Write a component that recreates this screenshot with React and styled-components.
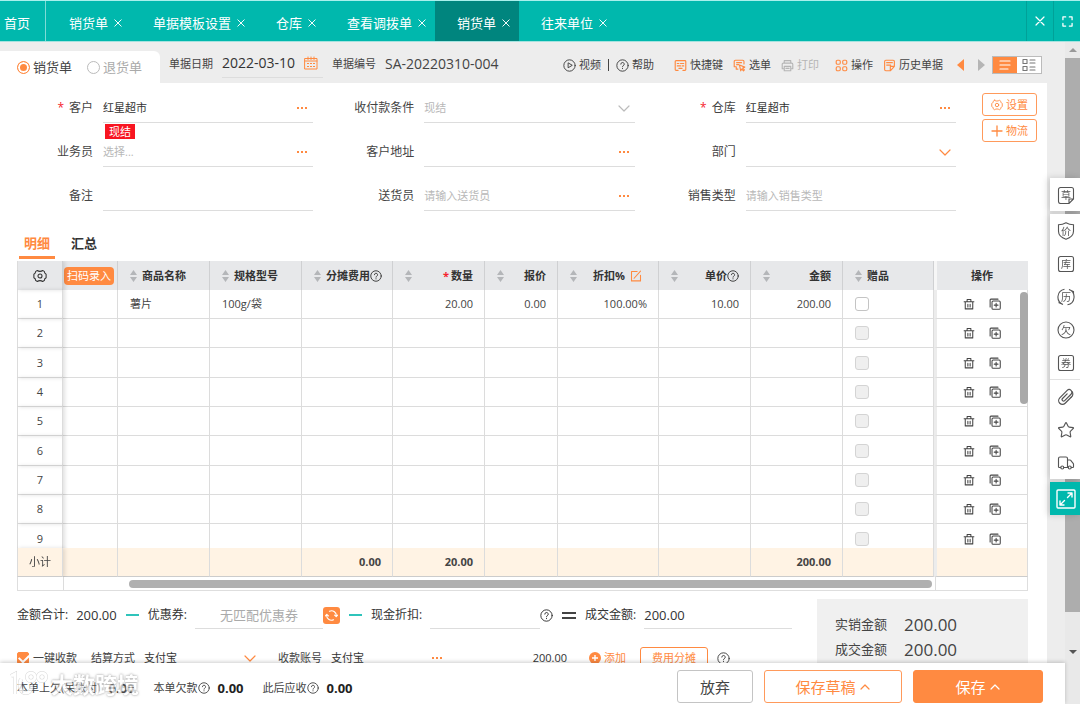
import React, { useState } from "react";
import styled, { createGlobalStyle } from "styled-components";
import { Star, Truck } from "lucide-react";

const tabs = ["销货单", "单据模板设置", "仓库", "查看调拨单", "销货单", "往来单位"];

const columns = [
  { key: "name", title: "商品名称", width: 92 },
  { key: "spec", title: "规格型号", width: 92 },
  { key: "fee", title: "分摊费用", width: 91, right: true, help: true },
  { key: "qty", title: "数量", width: 92, right: true, required: true },
  { key: "quote", title: "报价", width: 73, right: true },
  { key: "discount", title: "折扣%", width: 101, right: true, edit: true },
  { key: "price", title: "单价", width: 92, right: true, help: true },
  { key: "amount", title: "金额", width: 92, right: true },
];

const goods = {
  name: "薯片",
  spec: "100g/袋",
  qty: "20.00",
  quote: "0.00",
  discount: "100.00%",
  price: "10.00",
  amount: "200.00",
};

const totals = { fee: "0.00", qty: "20.00", amount: "200.00" };

const fields = [
  { id: "customer", label: "客户", value: "红星超市", more: "dots", required: true, tag: "现结" },
  { id: "terms", label: "收付款条件", placeholder: "现结", more: "down", muted: true },
  { id: "store", label: "仓库", value: "红星超市", more: "dots", required: true },
  { id: "sales", label: "业务员", placeholder: "选择...", more: "dots" },
  { id: "address", label: "客户地址", more: "dots" },
  { id: "dept", label: "部门", more: "down" },
  { id: "remark", label: "备注" },
  { id: "courier", label: "送货员", placeholder: "请输入送货员", more: "dots" },
  { id: "kind", label: "销售类型", placeholder: "请输入销售类型" },
];

/* ---------- icons ---------- */

function Icon({ size = 13, view = 16, width = 1.2, children }) {
  return (
    <svg
      width={size}
      height={size}
      viewBox={`0 0 ${view} ${view}`}
      fill="none"
      stroke="currentColor"
      strokeWidth={width}
      strokeLinecap="round"
      strokeLinejoin="round"
      aria-hidden="true"
    >
      {children}
    </svg>
  );
}

const HelpIcon = ({ size = 13 }) => (
  <Icon size={size}>
    <circle cx="8" cy="8" r="7" />
    <path d="M5.9 6.3a2.1 2.1 0 1 1 3 2c-.6.3-.9.6-.9 1.3M8 11.6v.3" />
  </Icon>
);

const CrossIcon = ({ size = 9 }) => (
  <Icon size={size} view={10} width={1.2}>
    <path d="M1 1l8 8M9 1l-8 8" />
  </Icon>
);

const ChevronIcon = ({ up, size = 12 }) => (
  <Icon size={size} view={12} width={1.2}>
    <path d={up ? "M2 8l4-4 4 4" : "M1 4l5 5 5-5"} />
  </Icon>
);

const DotsIcon = () => (
  <svg width="12" height="12" viewBox="0 0 12 12" fill="currentColor" aria-hidden="true">
    <rect x="1" y="5" width="2" height="2" />
    <rect x="5" y="5" width="2" height="2" />
    <rect x="9" y="5" width="2" height="2" />
  </svg>
);

const GearIcon = ({ size = 14 }) => (
  <Icon size={size}>
    <path d="M5 1.700c.9.8 1.6 1 3 1s2.100-.2 3-1c1 .3 2 1.200 2 1.200-.1 1.300.3 2.200 2 3v4.200c-1.700.8-2.100 1.700-2 3 0 0-1 .9-2 1.200-.9-.8-1.600-1-3-1s-2.100.2-3 1c-1-.3-2-1.200-2-1.200.1-1.300-.3-2.200-2-3V5.900c1.700-.8 2.100-1.700 2-3 0 0 1-.9 2-1.200z" />
    <circle cx="8" cy="8" r="2.300" />
  </Icon>
);

const CalendarIcon = () => (
  <Icon size={14} view={14} width={1}>
    <path d="M1 2.500h12v10.500H1zM1 5h12M4 1v2.500M7 1v2.500M10 1v2.500" />
    <path d="M3 7.500h2M6 7.500h2M9 7.500h2M3 10.500h2M6 10.500h2M9 10.500h2" strokeLinecap="butt" />
  </Icon>
);

const PlayIcon = () => (
  <Icon>
    <circle cx="8" cy="8" r="7" />
    <path d="M6.300 5.200v5.600L11 8z" />
  </Icon>
);

const KeysIcon = () => (
  <Icon width={1.4}>
    <path d="M5 14H2.500a1 1 0 0 1-1-1V3a1 1 0 0 1 1-1h11a1 1 0 0 1 1 1v10a1 1 0 0 1-1 1H11M4 5.500h2M8 5.500h4M4 8.500h4M10 8.500h2M6 11.500h4" />
  </Icon>
);

const PickIcon = () => (
  <Icon width={1.4}>
    <path d="M6 12.500H4V9.500H1.500V3a1.500 1.500 0 0 1 1.500-1.500h9A1.500 1.500 0 0 1 13.500 3v3M4.500 4.500h6M4.500 7h2.500M8 7.500l6.500 2.500-2.500 1.200 2 2.300-1 1-2.200-2.200L9.500 14.500z" />
  </Icon>
);

const PrintIcon = () => (
  <Icon width={1.4}>
    <path d="M4 5V2h8v3M4 12H1.500V6.500A1.500 1.500 0 0 1 3 5h10a1.500 1.500 0 0 1 1.500 1.500V12H12M4 9h8v5.500H4zM6 11.500h4" />
  </Icon>
);

const GridIcon = () => (
  <Icon width={1.4}>
    <rect x="1.500" y="1.500" width="5" height="5" rx="1.500" />
    <rect x="9.500" y="1.500" width="5" height="5" rx="1.500" />
    <rect x="1.500" y="9.500" width="5" height="5" rx="1.500" />
    <rect x="9.500" y="9.500" width="5" height="5" rx="1.500" />
  </Icon>
);

const HistoryIcon = () => (
  <Icon width={1.4}>
    <path d="M14 9V3a1.500 1.500 0 0 0-1.500-1.500h-9A1.500 1.500 0 0 0 2 3v10a1.500 1.500 0 0 0 1.500 1.500H9L14 9h-5v5.500M4.500 4.500h7M4.500 7.500h5" />
  </Icon>
);

const TrashIcon = () => (
  <Icon size={12} width={1.4}>
    <path d="M1.500 5h13M3 5v9.500h10V5M5.500 5V2h5v3M6.500 8.500V12M9.500 8.500V12" />
  </Icon>
);

const CopyIcon = () => (
  <Icon size={12} width={1.4}>
    <rect x="4" y="4" width="11" height="11" rx="1.500" />
    <path d="M1.500 12V2.500a1 1 0 0 1 1-1H12M9.500 7v5M7 9.500h5" />
  </Icon>
);

const EditIcon = () => (
  <Icon size={12} width={1.4}>
    <path d="M9.500 2H2v12.500h12V7M5.500 11L14 1.500" />
  </Icon>
);

const SortIcon = () => (
  <svg width="7" height="12" viewBox="0 0 7 12" fill="#b4b6b9" aria-hidden="true">
    <path d="M3.500 0L7 5H0zM3.500 12L7 7H0z" />
  </svg>
);

const RefreshIcon = () => (
  <Icon size={13} width={1.400}>
    <path d="M5.500 2.800A5.800 5.800 0 0 1 13.800 9M10.500 13.200A5.800 5.800 0 0 1 2.200 7M11.800 7.500l2 2 1.700-2M.5 8.500l1.700-2 2 2" />
  </Icon>
);

const ClipIcon = () => (
  <Icon size={18} view={18} width={1.2}>
    <g transform="rotate(-45 9 9)">
      <path d="M12.500 12.800H4a3.800 3.800 0 0 1 0-7.600h10.500a2.700 2.700 0 0 1 0 5.400H5.500a1.500 1.500 0 0 1 0-3H12" />
      <path d="M12.500 12.800a3.800 3.800 0 0 0 4.500-3.300" />
    </g>
  </Icon>
);

const ExpandIcon = () => (
  <Icon size={20} view={20} width={1.400}>
    <rect x="1" y="1" width="18" height="18" rx="1" />
    <path d="M11.500 8.500L16 4M12 4h4v4M8.500 11.500L4 16M4 12v4h4" />
  </Icon>
);

const frames = {
  note: "M12 17.500H3.500a2 2 0 0 1-2-2v-12a2 2 0 0 1 2-2h11a2 2 0 0 1 2 2V13L12 17.500V13h4.500",
  shield: "M9 .8c2.500 1.500 4.500 2 7.500 2v6.500c0 4-3 6.500-7.500 8-4.500-1.500-7.500-4-7.500-8V2.800c3 0 5-.5 7.500-2z",
  box: "M3.500 1.500h11a2 2 0 0 1 2 2v11a2 2 0 0 1-2 2h-11a2 2 0 0 1-2-2v-11a2 2 0 0 1 2-2z",
  round: "M9 1a8 8 0 1 1 0 16A8 8 0 0 1 9 1z",
  turn: "M6 16.500A8 8 0 0 1 7.500 1.200M1.500 14.500l4.500 2M12 1.500A8 8 0 0 1 10.500 16.800M12 1.500l4.500 2V6",
};

function Glyph({ frame, children }) {
  return (
    <svg width="18" height="18" viewBox="0 0 18 18" aria-hidden="true">
      <path d={frames[frame]} fill="none" stroke="currentColor" strokeWidth="1.100" />
      <text x="9" y="13" fontSize="10" textAnchor="middle" fill="currentColor">
        {children}
      </text>
    </svg>
  );
}

function Field({ id, label, value, placeholder, more, required, muted, tag }) {
  return (
    <FieldRow>
      <FieldLabel htmlFor={id}>
        {required && <Required>*</Required>}
        {label}
      </FieldLabel>
      <FieldBox>
        <FieldInput id={id} defaultValue={value} placeholder={placeholder} />
        {more && (
          <MoreButton type="button" aria-label={label} $muted={muted}>
            {more === "dots" ? <DotsIcon /> : <ChevronIcon />}
          </MoreButton>
        )}
        {tag && <Tag>{tag}</Tag>}
      </FieldBox>
    </FieldRow>
  );
}

function App() {
  const [kind, setKind] = useState("sale");
  const [gift, setGift] = useState(false);
  const [quickPay, setQuickPay] = useState(true);

  return (
    <Page>
      <GlobalStyle />
      <TopBar>
        <HomeTab href="#home">首页</HomeTab>
        {tabs.map((tab, i) => (
          <TopTab key={i} $active={i === 4}>
            <a href="#tab">{tab}</a>
            <PlainButton type="button" aria-label="关闭">
              <CrossIcon size={8} />
            </PlainButton>
          </TopTab>
        ))}
        <TopTools>
          <TopTool type="button" aria-label="关闭全部">
            <CrossIcon size={10} />
          </TopTool>
          <TopTool type="button" aria-label="全屏">
            <Icon size={11} view={12} width={1.4}>
              <path d="M1 4V1h3M8 1h3v3M11 8v3H8M4 11H1V8" />
            </Icon>
          </TopTool>
        </TopTools>
      </TopBar>

      <Body>
        <Work>
          <Content>
            <Toolbar>
              <KindTabs>
                <KindLabel $on={kind === "sale"}>
                  <Radio name="kind" checked={kind === "sale"} onChange={() => setKind("sale")} />
                  销货单
                </KindLabel>
                <KindLabel $on={kind === "back"}>
                  <Radio name="kind" checked={kind === "back"} onChange={() => setKind("back")} />
                  退货单
                </KindLabel>
              </KindTabs>
              <BillLabel htmlFor="date">单据日期</BillLabel>
              <DateBox>
                <DateInput id="date" defaultValue="2022-03-10" />
                <CalendarIcon />
              </DateBox>
              <BillLabel as="span">单据编号</BillLabel>
              <BillNo>SA-20220310-004</BillNo>
              <Tools>
                <Tool type="button"><PlayIcon />视频</Tool>
                <Bar />
                <Tool type="button"><HelpIcon />帮助</Tool>
                <ToolGroup $wide>
                  <Tool type="button" $accent><KeysIcon /><span>快捷键</span></Tool>
                  <Tool type="button" $accent><PickIcon /><span>选单</span></Tool>
                  <Tool type="button" disabled><PrintIcon />打印</Tool>
                </ToolGroup>
                <ToolGroup>
                  <Tool type="button" $accent><GridIcon /><span>操作</span></Tool>
                  <Tool type="button" $accent><HistoryIcon /><span>历史单据</span></Tool>
                </ToolGroup>
                <Pager type="button" aria-label="上一张" $color="#ff8a41">
                  <svg width="7" height="12" viewBox="0 0 7 12" fill="currentColor"><path d="M7 0v12L0 6z" /></svg>
                </Pager>
                <Pager type="button" aria-label="下一张" $color="#b5b5b5">
                  <svg width="7" height="12" viewBox="0 0 7 12" fill="currentColor"><path d="M0 0v12l7-6z" /></svg>
                </Pager>
                <Toggle>
                  <ToggleButton type="button" aria-label="列表" $on>
                    <Icon size={12} view={12} width={1.2}><path d="M1 2h10M1 6h10M1 10h8" /></Icon>
                  </ToggleButton>
                  <ToggleButton type="button" aria-label="卡片">
                    <Icon size={14} view={14} width={1.1}>
                      <path d="M1 1.500h4v4H1zM1 8.500h4v4H1zM8 2h5M8 5h5M8 9h5M8 12h5" />
                    </Icon>
                  </ToggleButton>
                </Toggle>
              </Tools>
            </Toolbar>

            <Panel>
              <FormArea>
                <FormGrid>
                  {fields.map((f) => (
                    <Field key={f.id} {...f} />
                  ))}
                </FormGrid>
                <SideButtons>
                  <SmallButton type="button"><GearIcon size={12} />设置</SmallButton>
                  <SmallButton type="button">
                    <Icon size={12} view={12} width={1.3}><path d="M6 1v10M1 6h10" /></Icon>
                    物流
                  </SmallButton>
                </SideButtons>
              </FormArea>

              <DetailTabs>
                <DetailTab type="button" $on>明细</DetailTab>
                <DetailTab type="button">汇总</DetailTab>
              </DetailTabs>

              <TableBox>
                <TableClip>
                  <Table>
                    <colgroup>
                      <col width="46" />
                      <col width="55" />
                      {columns.map((c) => (
                        <col key={c.key} width={c.width} />
                      ))}
                      <col width="91" />
                      <col width="94" />
                    </colgroup>
                    <thead>
                      <tr>
                        <Th $frozen><GearIcon size={14} /></Th>
                        <Th><ScanButton type="button">扫码录入</ScanButton></Th>
                        {columns.map((c) => (
                          <Th key={c.key}>
                            <HeadCell $right={c.right}>
                              <SortIcon />
                              <HeadText>
                                {c.required && <HeadStar>*</HeadStar>}
                                {c.title}
                                {c.help && <HelpIcon size={12} />}
                                {c.edit && <EditSlot><EditIcon /></EditSlot>}
                              </HeadText>
                            </HeadCell>
                          </Th>
                        ))}
                        <Th><HeadCell><SortIcon /><HeadText>赠品</HeadText></HeadCell></Th>
                        <Th $last>操作</Th>
                      </tr>
                    </thead>
                    <tbody>
                      {[1, 2, 3, 4, 5, 6, 7, 8, 9].map((n) => (
                        <tr key={n}>
                          <Td $frozen>{n}</Td>
                          <Td />
                          {columns.map((c) => (
                            <Td key={c.key} $right={c.right}>{n === 1 ? goods[c.key] : ""}</Td>
                          ))}
                          <Td>
                            <GiftBox
                              aria-label={`赠品 ${n}`}
                              disabled={n > 1}
                              checked={n === 1 && gift}
                              onChange={() => setGift(!gift)}
                            />
                          </Td>
                          <Td $last>
                            <RowActions>
                              <PlainButton type="button" aria-label="删除"><TrashIcon /></PlainButton>
                              <PlainButton type="button" aria-label="复制"><CopyIcon /></PlainButton>
                            </RowActions>
                          </Td>
                        </tr>
                      ))}
                    </tbody>
                    <tfoot>
                      <tr>
                        <Tf $frozen>小计</Tf>
                        <Tf />
                        {columns.map((c) => (
                          <Tf key={c.key} $right>{totals[c.key]}</Tf>
                        ))}
                        <Tf />
                        <Tf $last />
                      </tr>
                    </tfoot>
                  </Table>
                </TableClip>
                <RowThumb />
                <ColumnScroll>
                  <ScrollStart />
                  <ScrollTrack><ScrollThumb /></ScrollTrack>
                  <ScrollEnd />
                </ColumnScroll>
              </TableBox>

              <Bottom>
                <BottomMain>
                  <SumRow>
                    <SumLabel as="span">金额合计:</SumLabel>
                    <SumValue>200.00</SumValue>
                    <Minus />
                    <SumLabel htmlFor="coupon">优惠券:</SumLabel>
                    <SumInput id="coupon" placeholder="无匹配优惠券" $width={128} $center />
                    <RefreshButton type="button" aria-label="刷新"><RefreshIcon /></RefreshButton>
                    <Minus />
                    <SumLabel htmlFor="cash">现金折扣:</SumLabel>
                    <SumInput id="cash" $width={110} />
                    <HelpIcon />
                    <Equal />
                    <SumLabel htmlFor="deal">成交金额:</SumLabel>
                    <SumInput id="deal" defaultValue="200.00" $width={148} />
                  </SumRow>
                  <PayRow>
                    <PayCheck>
                      <CheckBox checked={quickPay} onChange={() => setQuickPay(!quickPay)} />
                      一键收款
                    </PayCheck>
                    <PayLabel htmlFor="method">结算方式</PayLabel>
                    <PayBox>
                      <FieldInput id="method" defaultValue="支付宝" />
                      <MoreButton type="button" aria-label="选择结算方式"><ChevronIcon /></MoreButton>
                    </PayBox>
                    <PayLabel htmlFor="account">收款账号</PayLabel>
                    <PayBox>
                      <FieldInput id="account" defaultValue="支付宝" />
                      <MoreButton type="button" aria-label="选择收款账号"><DotsIcon /></MoreButton>
                    </PayBox>
                    <PayAmount>200.00</PayAmount>
                    <AddButton type="button">
                      <svg width="12" height="12" viewBox="0 0 12 12" aria-hidden="true">
                        <circle cx="6" cy="6" r="6" fill="#ff8a41" />
                        <path d="M6 3v6M3 6h6" stroke="#fff" strokeWidth="1.400" />
                      </svg>
                      添加
                    </AddButton>
                    <ShareButton type="button">费用分摊</ShareButton>
                    <HelpIcon />
                  </PayRow>
                </BottomMain>
                <Summary>
                  <SummaryLine><dt>实销金额</dt><dd>200.00</dd></SummaryLine>
                  <SummaryLine><dt>成交金额</dt><dd>200.00</dd></SummaryLine>
                </Summary>
              </Bottom>
            </Panel>
          </Content>

          <Footer>
            <FootItem>本单上欠(呆账付)<b>0.00</b></FootItem>
            <FootItem>本单欠款<HelpIcon size={12} /><b>0.00</b></FootItem>
            <FootItem>此后应收<HelpIcon size={12} /><b>0.00</b></FootItem>
            <FootButtons>
              <FootButton type="button" $width={76} $tone="plain">放弃</FootButton>
              <FootButton type="button" $width={138} $tone="line">保存草稿<ChevronIcon up /></FootButton>
              <FootButton type="button" $width={130} $tone="fill">保存<ChevronIcon up /></FootButton>
            </FootButtons>
            <Watermark>
              <svg width="40" height="28" viewBox="0 0 40 28" fill="none" aria-hidden="true">
                <g stroke="#c8c8c8" strokeWidth="4">
                  <path d="M2 6l4-2v20M12 9c-3 8 0 14 5 14 4 0 6-4 5-8" />
                  <circle cx="22" cy="7" r="4" />
                  <circle cx="33" cy="7" r="4" />
                </g>
                <g stroke="#fff" strokeWidth="3">
                  <path d="M2 6l4-2v20M12 9c-3 8 0 14 5 14 4 0 6-4 5-8" />
                  <circle cx="22" cy="7" r="4" />
                  <circle cx="33" cy="7" r="4" />
                </g>
              </svg>
              大数跨境
            </Watermark>
          </Footer>
        </Work>

        <PageScroll>
          <Arrow $up />
          <PageThumb />
          <PageTrack><Arrow /></PageTrack>
        </PageScroll>

        <Rail>
          <RailGroup>
            <RailButton type="button" aria-label="草稿"><Glyph frame="note">草</Glyph></RailButton>
          </RailGroup>
          <RailGroup>
            <RailButton type="button" aria-label="价格"><Glyph frame="shield">价</Glyph></RailButton>
            <RailButton type="button" aria-label="库存"><Glyph frame="box">库</Glyph></RailButton>
            <RailButton type="button" aria-label="历史"><Glyph frame="turn">历</Glyph></RailButton>
            <RailButton type="button" aria-label="欠款"><Glyph frame="round">欠</Glyph></RailButton>
            <RailButton type="button" aria-label="优惠券"><Glyph frame="box">券</Glyph></RailButton>
            <RailLine />
            <RailButton type="button" aria-label="附件"><ClipIcon /></RailButton>
            <RailButton type="button" aria-label="收藏"><Star size={18} strokeWidth={1.5} /></RailButton>
            <RailButton type="button" aria-label="物流"><Truck size={18} strokeWidth={1.5} /></RailButton>
          </RailGroup>
          <RailGroup $accent>
            <RailButton type="button" aria-label="展开"><ExpandIcon /></RailButton>
          </RailGroup>
        </Rail>
      </Body>
    </Page>
  );
}

const GlobalStyle = createGlobalStyle`
  * {
    box-sizing: border-box;
  }
  body {
    margin: 0;
    background: #ededed;
    color: #444;
    font-family: "Open Sans", "Noto Sans CJK SC", sans-serif;
    font-size: 11px;
    line-height: 16px;
  }
  button, input {
    font: inherit;
    color: inherit;
    margin: 0;
  }
  a {
    color: inherit;
    text-decoration: none;
  }
  svg {
    flex: none;
    display: block;
  }
`;

const Page = styled.div`
  display: flex;
  flex-direction: column;
  height: 100vh;
  overflow: hidden;
`;

const PlainButton = styled.button`
  display: flex;
  padding: 0;
  border: 0;
  background: none;
`;

const TopBar = styled.nav`
  display: flex;
  flex: none;
  height: 42px;
  background: #00b8ad;
  border-top: 1px solid #a8f0ec;
  border-bottom: 1px solid #a5e3df;
  color: #fff;
  font-size: 13px;
  white-space: nowrap;
`;

const HomeTab = styled.a`
  display: flex;
  align-items: center;
  width: 46px;
  margin-right: 1px;
  padding: 3px 0 0 4px;
  border-right: 1px solid #7fdbd6;
`;

const TopTab = styled.div`
  display: flex;
  align-items: center;
  gap: 6px;
  padding: 3px 9px 0 22px;
  background: ${(props) => (props.$active ? "#00857e" : "transparent")};
`;

const TopTools = styled.div`
  display: flex;
  margin-left: auto;
`;

const TopTool = styled(PlainButton)`
  width: 27px;
  align-items: center;
  justify-content: center;
  border-left: 1px solid #00a198;
`;

const Body = styled.div`
  display: flex;
  flex: 1;
  min-height: 0;
  position: relative;
`;

const Work = styled.main`
  display: flex;
  flex-direction: column;
  flex: 1;
  min-width: 0;
`;

const Content = styled.div`
  flex: 1;
  min-height: 0;
  overflow: hidden;
  padding-right: 18px;
`;

const Toolbar = styled.div`
  display: flex;
  align-items: center;
  height: 41px;
  padding-top: 2px;
  white-space: nowrap;
`;

const KindTabs = styled.div`
  display: flex;
  align-items: center;
  align-self: flex-end;
  gap: 15px;
  width: 160px;
  height: 32px;
  padding: 0 0 0 17px;
  background: #fff;
  border-radius: 0 6px 0 0;
`;

const KindLabel = styled.label`
  display: flex;
  align-items: center;
  gap: 3px;
  font-size: 13px;
  color: ${(props) => (props.$on ? "#444" : "#aaa")};
`;

const Radio = styled.input.attrs({ type: "radio" })`
  appearance: none;
  width: 13px;
  height: 13px;
  border: 1px solid #bbb;
  border-radius: 50%;
  background: #fff;
  &:checked {
    border-color: #ff8a41;
    background: #ff8a41;
    box-shadow: inset 0 0 0 2px #fff;
  }
`;

const BillLabel = styled.label`
  margin: 0 9px;
`;

const DateBox = styled.div`
  display: flex;
  align-items: center;
  width: 101px;
  height: 28px;
  padding-right: 5px;
  border-bottom: 1px solid #ddd;
  color: #ff8a41;
`;

const DateInput = styled.input`
  flex: 1;
  width: 0;
  padding: 0;
  border: 0;
  background: none;
  color: #333;
  font-size: 14px;
`;

const BillNo = styled.span`
  font-size: 14px;
`;

const Tools = styled.div`
  display: flex;
  align-items: center;
  gap: 7px;
  margin-left: auto;
  padding: 3px 5px 0 0;
`;

const ToolGroup = styled.div`
  display: flex;
  gap: 10px;
  margin-left: ${(props) => (props.$wide ? 13 : 9)}px;
`;

const Tool = styled.button`
  display: flex;
  align-items: center;
  gap: 3px;
  padding: 0;
  border: 0;
  background: none;
  color: ${(props) => (props.$accent ? "#ff8a41" : "#444")};
  span {
    color: #444;
  }
  &:disabled {
    color: #b5b5b5;
  }
`;

const Bar = styled.span`
  width: 1px;
  height: 12px;
  background: #444;
`;

const Pager = styled(PlainButton)`
  margin-left: 7px;
  color: ${(props) => props.$color};
`;

const Toggle = styled.div`
  display: flex;
  width: 50px;
  height: 18px;
  border: 1px solid #bbb;
`;

const ToggleButton = styled(PlainButton)`
  flex: 1;
  align-items: center;
  justify-content: center;
  color: ${(props) => (props.$on ? "#fff" : "#777")};
  background: ${(props) => (props.$on ? "#ff8a41" : "#fff")};
`;

const Panel = styled.section`
  padding-bottom: 20px;
  background: #fff;
`;

const FormArea = styled.div`
  display: flex;
  gap: 18px;
  padding: 10px 10px 0 0;
`;

const FormGrid = styled.div`
  display: grid;
  grid-template-columns: repeat(3, 1fr);
  align-content: start;
  row-gap: 14px;
  flex: 1;
`;

const FieldRow = styled.div`
  display: flex;
  align-items: center;
  gap: 10px;
  height: 30px;
  padding-right: 8px;
`;

const FieldLabel = styled.label`
  width: 93px;
  text-align: right;
  font-size: 12px;
`;

const Required = styled.span`
  margin-right: 5px;
  color: #f5222d;
`;

const FieldBox = styled.div`
  position: relative;
  display: flex;
  flex: 1;
  align-items: center;
  height: 30px;
  border-bottom: 1px solid #ddd;
`;

const FieldInput = styled.input`
  flex: 1;
  width: 0;
  padding: 0;
  border: 0;
  background: none;
  color: #333;
  &::placeholder {
    color: #b8b8b8;
    opacity: 1;
  }
`;

const MoreButton = styled(PlainButton)`
  margin-right: 5px;
  color: ${(props) => (props.$muted ? "#bbb" : "#ff8a41")};
`;

const Tag = styled.span`
  position: absolute;
  top: 31px;
  left: 2px;
  padding: 0 4px;
  background: #f81521;
  color: #fff;
  line-height: 15px;
`;

const SideButtons = styled.div`
  display: flex;
  flex-direction: column;
  gap: 3px;
`;

const SmallButton = styled.button`
  display: flex;
  align-items: center;
  justify-content: center;
  gap: 3px;
  width: 55px;
  height: 23px;
  padding: 0;
  border: 1px solid #ff9a5b;
  border-radius: 3px;
  background: #fff;
  color: #ff8a41;
`;

const DetailTabs = styled.div`
  display: flex;
  gap: 11px;
  height: 48px;
  align-items: flex-end;
  padding-left: 19px;
  margin-bottom: 2px;
`;

const DetailTab = styled.button`
  padding: 0 5px 4px;
  height: 25px;
  border: 0;
  border-bottom: 3px solid ${(props) => (props.$on ? "#ff8a41" : "transparent")};
  background: none;
  color: ${(props) => (props.$on ? "#ff8a41" : "#333")};
  font-size: 13px;
  font-weight: 700;
  line-height: 16px;
`;

const TableBox = styled.div`
  position: relative;
  margin: 0 19px 0 17px;
`;

const TableClip = styled.div`
  height: 316px;
  overflow: hidden;
`;

const Table = styled.table`
  width: 100%;
  table-layout: fixed;
  border-collapse: separate;
  border-spacing: 0;
  white-space: nowrap;
  tbody tr {
    height: 29px;
  }
  tbody tr:nth-child(3n) {
    height: 30px;
  }
  tfoot {
    position: sticky;
    bottom: 0;
    z-index: 1;
  }
`;

const Cell = styled.td`
  padding: 0 11px 0 12px;
  border-right: 1px solid #dcdcdc;
  text-align: ${(props) => (props.$right ? "right" : "left")};
  ${(props) =>
    props.$frozen &&
    `
    position: relative;
    padding: 0;
    text-align: center;
    border-left: 1px solid #dcdcdc;
    box-shadow: 2px 0 4px rgba(0, 0, 0, 0.12);
    svg { margin: 0 auto; }
  `}
  ${(props) =>
    props.$last &&
    `
    padding: 0;
    text-align: center;
    border-left: 3px solid #ececec;
  `}
`;

const Th = styled(Cell).attrs({ as: "th" })`
  height: 29px;
  background: #e7e8ea;
  color: #333;
  border-right-color: ${(props) => (props.$last ? "#e7e8ea" : "#cfd0d2")};
  border-left-color: ${(props) => (props.$last ? "#f6f6f6" : "#dcdcdc")};
`;

const Td = styled(Cell)`
  border-bottom: 1px solid #dcdcdc;
`;

const Tf = styled(Cell)`
  height: 29px;
  background: #fff3e4;
  border-bottom: 1px solid #ccc;
  font-weight: ${(props) => (props.$frozen ? 400 : 700)};
`;

const HeadCell = styled.div`
  display: flex;
  align-items: center;
  justify-content: ${(props) => (props.$right ? "space-between" : "flex-start")};
  gap: 5px;
`;

const HeadText = styled.span`
  display: flex;
  align-items: center;
`;

const HeadStar = styled.span`
  margin-right: 2px;
  color: #f5222d;
`;

const EditSlot = styled.span`
  margin: 0 5px;
  color: #ff8a41;
`;

const ScanButton = styled.button`
  width: 50px;
  height: 18px;
  padding: 0;
  margin-left: -11px;
  border: 0;
  border-radius: 4px;
  background: #ff8a41;
  color: #fff;
  font-weight: 400;
`;

const GiftBox = styled.input.attrs({ type: "checkbox" })`
  display: block;
  appearance: none;
  width: 14px;
  height: 14px;
  border: 1px solid #c4c4c4;
  border-radius: 3px;
  background: #fff;
  &:checked {
    background: #ff8a41;
  }
  &:disabled {
    border-color: #d4d4d4;
    background: #efefef;
  }
`;

const RowActions = styled.div`
  display: flex;
  justify-content: center;
  gap: 14px;
`;

const RowThumb = styled.div`
  position: absolute;
  top: 31px;
  right: 0;
  width: 8px;
  height: 112px;
  border-radius: 4px;
  background: #a9a9a9;
`;

const ColumnScroll = styled.div`
  display: flex;
  height: 14px;
  border: 1px solid #dedede;
  border-top: 0;
`;

const ScrollStart = styled.div`
  width: 46px;
  border-right: 1px solid #dcdcdc;
`;

const ScrollEnd = styled.div`
  width: 92px;
  border-left: 1px solid #dcdcdc;
`;

const ScrollTrack = styled.div`
  flex: 1;
  padding: 3px 3px 0 65px;
`;

const ScrollThumb = styled.div`
  height: 8px;
  border-radius: 4px;
  background: #b0b0b0;
`;

const Bottom = styled.div`
  display: flex;
  justify-content: space-between;
  padding: 8px 19px 0 17px;
`;

const BottomMain = styled.div`
  padding-top: 2px;
  white-space: nowrap;
`;

const SumRow = styled.div`
  display: flex;
  align-items: center;
  height: 28px;
  color: #333;
`;

const SumLabel = styled.label`
  margin-right: 8px;
  font-size: 12px;
`;

const SumValue = styled.span`
  font-size: 13px;
`;

const Minus = styled.span`
  width: 13px;
  height: 2px;
  margin: 0 9px;
  background: #2fc4bb;
`;

const Equal = styled.span`
  width: 14px;
  height: 7px;
  margin: 0 9px;
  border: solid #444;
  border-width: 2px 0;
`;

const SumInput = styled.input`
  width: ${(props) => props.$width}px;
  height: 28px;
  padding: 0;
  border: 0;
  border-bottom: 1px solid #ddd;
  background: none;
  font-size: 13px;
  text-align: ${(props) => (props.$center ? "center" : "left")};
  &::placeholder {
    color: #aaa;
    opacity: 1;
  }
`;

const RefreshButton = styled(PlainButton)`
  align-items: center;
  justify-content: center;
  width: 17px;
  height: 17px;
  border-radius: 3px;
  background: #ff8a41;
  color: #fff;
`;

const PayRow = styled.div`
  display: flex;
  align-items: center;
  height: 22px;
  margin-top: 18px;
`;

const PayCheck = styled.label`
  display: flex;
  align-items: center;
  gap: 4px;
  margin-right: 14px;
`;

const CheckBox = styled.input.attrs({ type: "checkbox" })`
  appearance: none;
  position: relative;
  width: 12px;
  height: 12px;
  border: 1px solid #ff8a41;
  border-radius: 2px;
  &:checked {
    background: #ff8a41;
  }
  &:checked::after {
    content: "";
    position: absolute;
    top: 1px;
    left: 1px;
    width: 8px;
    height: 5px;
    border: solid #fff;
    border-width: 0 0 2px 2px;
    transform: rotate(-45deg);
  }
`;

const PayLabel = styled.label`
  margin-right: 9px;
`;

const PayBox = styled.div`
  display: flex;
  align-items: center;
  width: 112px;
  margin-right: 22px;
  ${MoreButton} {
    margin-right: 0;
  }
`;

const PayAmount = styled.span`
  width: 102px;
  text-align: right;
  color: #333;
`;

const AddButton = styled(PlainButton)`
  align-items: center;
  gap: 3px;
  margin: 0 14px 0 22px;
  color: #ff8a41;
`;

const ShareButton = styled.button`
  width: 68px;
  height: 22px;
  margin-right: 9px;
  padding: 0;
  border: 1px solid #ff8a41;
  border-radius: 3px;
  background: #fff;
  color: #ff8a41;
`;

const Summary = styled.dl`
  width: 211px;
  height: 100px;
  margin: 0;
  padding: 13px 18px;
  background: #f0f0f0;
`;

const SummaryLine = styled.div`
  display: flex;
  gap: 17px;
  font-size: 13px;
  line-height: 25px;
  dd {
    margin: 0;
    font-size: 17px;
  }
`;

const Footer = styled.footer`
  position: relative;
  display: flex;
  align-items: center;
  gap: 19px;
  flex: none;
  height: 41px;
  padding: 6px 22px 0 17px;
  background: #fff;
  box-shadow: 0 -1px 4px rgba(0, 0, 0, 0.2);
  white-space: nowrap;
`;

const FootItem = styled.span`
  display: flex;
  align-items: center;
  padding-top: 2px;
  b {
    margin-left: 8px;
    color: #222;
    font-size: 13px;
  }
`;

const FootButtons = styled.div`
  display: flex;
  gap: 11px;
  margin-left: auto;
`;

const tones = {
  plain: "border-color: #c4c4c4; background: #fff; color: #444;",
  line: "border-color: #ff9a5b; background: #fff; color: #ff8a41;",
  fill: "border-color: #ff8a41; background: #ff8a41; color: #fff;",
};

const FootButton = styled.button`
  display: flex;
  align-items: center;
  justify-content: center;
  gap: 3px;
  width: ${(props) => props.$width}px;
  height: 33px;
  padding: 0;
  border: 1px solid;
  border-radius: 3px;
  font-size: 15px;
  ${(props) => tones[props.$tone]}
`;

const Watermark = styled.div`
  position: absolute;
  top: 7px;
  left: 9px;
  display: flex;
  align-items: center;
  gap: 2px;
  color: #fff;
  font-size: 22px;
  font-weight: 700;
  line-height: 28px;
  opacity: 0.75;
  text-shadow: 0 0 2px #999, 0 0 3px #aaa;
  pointer-events: none;
`;

const PageScroll = styled.div`
  display: flex;
  flex-direction: column;
  width: 15px;
  background: #e9e9e9;
`;

const Arrow = styled.span`
  align-self: center;
  margin: ${(props) => (props.$up ? "6px 0" : "38px 0 0")};
  border: 4px solid transparent;
  border-width: ${(props) => (props.$up ? "0 4px 4px" : "4px 4px 0")};
  border-top-color: ${(props) => (props.$up ? "transparent" : "#555")};
  border-bottom-color: ${(props) => (props.$up ? "#999" : "transparent")};
`;

const PageThumb = styled.div`
  flex: 6;
  background: #adadad;
`;

const PageTrack = styled.div`
  display: flex;
  flex-direction: column;
  flex: 1;
`;

const Rail = styled.aside`
  position: absolute;
  top: 136px;
  right: 0;
  z-index: 2;
  display: flex;
  flex-direction: column;
  gap: 3px;
  width: 30px;
  filter: drop-shadow(-2px 0 3px rgba(0, 0, 0, 0.16));
`;

const RailGroup = styled.div`
  display: flex;
  flex-direction: column;
  background: ${(props) => (props.$accent ? "#00b8ad" : "#fff")};
  color: ${(props) => (props.$accent ? "#fff" : "#555")};
`;

const RailButton = styled(PlainButton)`
  align-items: center;
  justify-content: center;
  height: 33px;
  padding-left: 2px;
`;

const RailLine = styled.span`
  height: 1px;
  background: #e2e2e2;
`;

export default App;
